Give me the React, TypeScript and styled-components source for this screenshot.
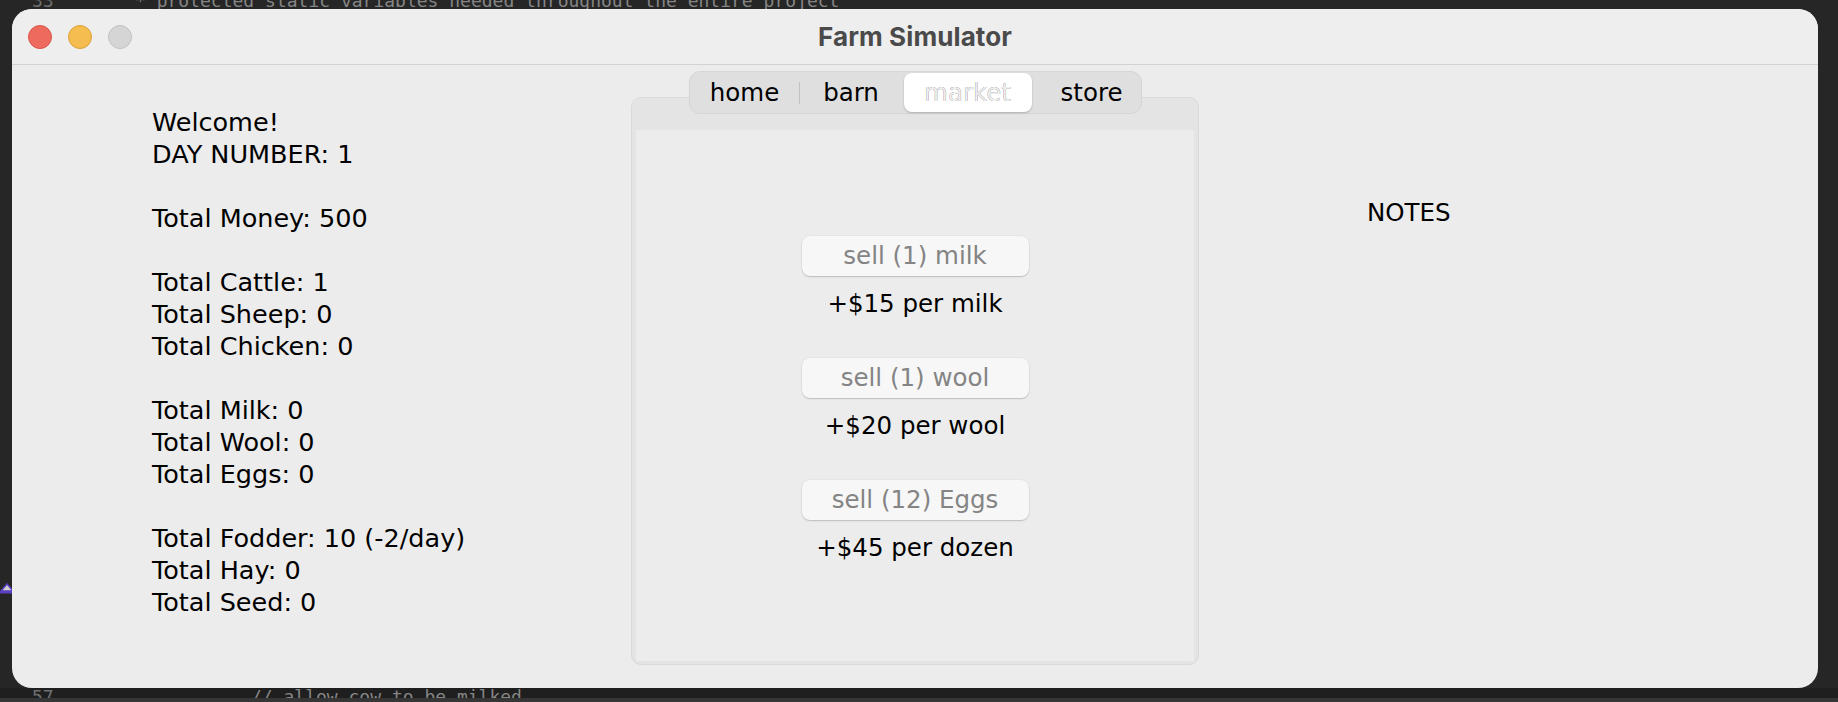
import React from 'react';
import styled, { createGlobalStyle } from 'styled-components';

const GlobalStyle = createGlobalStyle`
  html, body {
    margin: 0;
    padding: 0;
    background: #262626;
  }
  body {
    width: 1838px;
    height: 702px;
    overflow: hidden;
  }
`;

const Desktop = styled.div`
  position: relative;
  width: 1838px;
  height: 702px;
  display: flex;
  flex-direction: column;
  background: #262626;
  overflow: hidden;
`;

const CodeStrip = styled.div<{ $h: number; $bg: string }>`
  flex: none;
  height: ${(p) => p.$h}px;
  overflow: hidden;
  background: ${(p) => p.$bg};
`;

const CodeRow = styled.div<{ $shift: number }>`
  display: flex;
  margin-top: ${(p) => p.$shift}px;
  padding-left: 32px;
  font-family: "DejaVu Sans Mono", "Liberation Mono", monospace;
  font-size: 18px;
  line-height: 18px;
  white-space: pre;
`;

const LineNo = styled.span`
  width: 103px;
  color: #6f6f6f;
`;

const Code = styled.span<{ $indent: number }>`
  padding-left: ${(p) => p.$indent}px;
  color: #858585;
`;

const StatusBar = styled.div`
  flex: none;
  height: 4px;
  background: #363636;
`;

const Marker = styled.svg`
  position: absolute;
  left: 0;
  top: 581px;
  width: 14px;
  height: 14px;
`;

const Window = styled.div`
  position: relative;
  z-index: 1;
  flex: none;
  margin-left: 12px;
  width: 1806px;
  height: 679px;
  border-radius: 20px;
  background: #ececec;
  display: flex;
  flex-direction: column;
  overflow: hidden;
`;

const TitleBar = styled.div`
  flex: none;
  height: 55px;
  display: grid;
  grid-template-columns: 1fr auto 1fr;
  align-items: center;
  background: #eeeeee;
  border-bottom: 1px solid #d2d2d2;
`;

const Lights = styled.div`
  display: flex;
  gap: 16px;
  padding-left: 16px;
`;

const Light = styled.span<{ $color: string; $edge: string }>`
  width: 24px;
  height: 24px;
  border-radius: 50%;
  box-sizing: border-box;
  background: ${(p) => p.$color};
  border: 1px solid ${(p) => p.$edge};
`;

const Title = styled.div`
  font-family: Inter, "Liberation Sans", sans-serif;
  font-weight: 700;
  font-size: 26px;
  color: #4a4a4a;
  letter-spacing: 0.1px;
`;

const Body = styled.div`
  flex: 1;
  display: flex;
  align-items: flex-start;
  font-family: "DejaVu Sans", "Liberation Sans", sans-serif;
  font-size: 24.5px;
  color: #000;
`;

const StatsColumn = styled.div`
  flex: none;
  width: 619px;
  box-sizing: border-box;
  padding: 41px 0 0 140px;
  font-size: 25.5px;
`;

const StatLine = styled.div`
  height: 32px;
  line-height: 32px;
  white-space: pre;
`;

const TabArea = styled.div`
  flex: none;
  width: 568px;
  padding-top: 6px;
  display: flex;
  flex-direction: column;
  align-items: center;
`;

const SegmentBar = styled.div`
  position: relative;
  z-index: 2;
  display: flex;
  align-items: center;
  height: 43px;
  box-sizing: border-box;
  padding: 0 1px;
  border-radius: 11px;
  background: #dfdfdf;
  border: 1px solid #d5d5d5;
`;

const Segment = styled.div<{ $w: number; $nudge: number; $active?: boolean; $divider?: boolean }>`
  position: relative;
  width: ${(p) => p.$w}px;
  height: ${(p) => (p.$active ? 39 : 41)}px;
  box-sizing: border-box;
  padding-left: ${(p) => p.$nudge}px;
  display: flex;
  align-items: center;
  justify-content: center;
  border-radius: 8px;
  background: ${(p) => (p.$active ? '#ffffff' : 'transparent')};
  box-shadow: ${(p) => (p.$active ? '0 1px 2px rgba(0,0,0,0.22)' : 'none')};
  color: ${(p) => (p.$active ? '#ededed' : '#000')};
  text-shadow: ${(p) =>
    p.$active ? '0 0 0.6px rgba(0,0,0,0.55), 0 0 0.6px rgba(0,0,0,0.35)' : 'none'};

  &::before {
    content: '';
    display: ${(p) => (p.$divider ? 'block' : 'none')};
    position: absolute;
    left: 0;
    top: 10px;
    width: 1px;
    height: 22px;
    background: #c2c2c2;
  }
`;

const Panel = styled.div`
  width: 568px;
  height: 568px;
  margin-top: -17px;
  box-sizing: border-box;
  border: 1px solid #d9d9d9;
  border-radius: 10px;
  background: #e4e4e4;
  padding: 0 4px 3px;
  display: flex;
  flex-direction: column;
`;

const PanelHeader = styled.div`
  flex: none;
  height: 32px;
`;

const PanelBody = styled.div`
  flex: 1;
  background: #ececec;
  display: flex;
  flex-direction: column;
  align-items: center;
  gap: 38px;
  padding-top: 106px;
`;

const SellGroup = styled.div`
  display: flex;
  flex-direction: column;
  align-items: center;
  gap: 12px;
`;

const SellButton = styled.button`
  width: 227px;
  height: 40px;
  padding: 0;
  border: none;
  border-radius: 8px;
  background: #f7f7f7;
  box-shadow: 0 1px 1.5px rgba(0, 0, 0, 0.18), 0 0 0 0.5px rgba(0, 0, 0, 0.05);
  font-family: "DejaVu Sans", "Liberation Sans", sans-serif;
  font-size: 24.5px;
  line-height: 40px;
  color: #848484;
`;

const Price = styled.div`
  height: 32px;
  line-height: 32px;
`;

const NotesColumn = styled.div`
  flex: none;
  padding: 132px 0 0 168px;
  line-height: 32px;
`;

const stats = [
  'Welcome!',
  'DAY NUMBER: 1',
  '',
  'Total Money: 500',
  '',
  'Total Cattle: 1',
  'Total Sheep: 0',
  'Total Chicken: 0',
  '',
  'Total Milk: 0',
  'Total Wool: 0',
  'Total Eggs: 0',
  '',
  'Total Fodder: 10 (-2/day)',
  'Total Hay: 0',
  'Total Seed: 0',
];

const tabs = [
  { label: 'home', w: 108, nudge: 0 },
  { label: 'barn', w: 105, nudge: 0, divider: true },
  { label: 'market', w: 128, nudge: 0, active: true },
  { label: 'store', w: 108, nudge: 12 },
];

const sales = [
  { action: 'sell (1) milk', price: '+$15 per milk' },
  { action: 'sell (1) wool', price: '+$20 per wool' },
  { action: 'sell (12) Eggs', price: '+$45 per dozen' },
];

const App: React.FC = () => {
  return (
    <>
      <GlobalStyle />
      <Desktop>
        <CodeStrip $h={9} $bg="#262626">
          <CodeRow $shift={-8}>
            <LineNo>33</LineNo>
            <Code $indent={0}>* protected static variables needed throughout the entire project</Code>
          </CodeRow>
        </CodeStrip>

        <Window>
          <TitleBar>
            <Lights>
              <Light $color="#ee6a5f" $edge="#d9564b" />
              <Light $color="#f5bd4f" $edge="#d9a13a" />
              <Light $color="#d5d5d5" $edge="#c2c2c2" />
            </Lights>
            <Title>Farm Simulator</Title>
            <div />
          </TitleBar>

          <Body>
            <StatsColumn>
              {stats.map((line, i) => (
                <StatLine key={i}>{line || ' '}</StatLine>
              ))}
            </StatsColumn>

            <TabArea>
              <SegmentBar>
                {tabs.map((t) => (
                  <Segment
                    key={t.label}
                    $w={t.w}
                    $nudge={t.nudge}
                    $active={t.active}
                    $divider={t.divider}
                  >
                    {t.label}
                  </Segment>
                ))}
              </SegmentBar>
              <Panel>
                <PanelHeader />
                <PanelBody>
                  {sales.map((s) => (
                    <SellGroup key={s.action}>
                      <SellButton disabled>{s.action}</SellButton>
                      <Price>{s.price}</Price>
                    </SellGroup>
                  ))}
                </PanelBody>
              </Panel>
            </TabArea>

            <NotesColumn>NOTES</NotesColumn>
          </Body>
        </Window>

        <CodeStrip $h={10} $bg="#1f1f1f">
          <CodeRow $shift={0}>
            <LineNo>57</LineNo>
            <Code $indent={116}>// allow cow to be milked</Code>
          </CodeRow>
        </CodeStrip>
        <StatusBar />

        <Marker viewBox="0 0 14 14">
          <polygon points="1,10 7,3 13,10" fill="#cfcfcf" stroke="#5a3fc2" strokeWidth="1.5" />
          <rect x="0" y="10" width="14" height="2.5" fill="#5a3fc2" />
        </Marker>
      </Desktop>
    </>
  );
};

export default App;
